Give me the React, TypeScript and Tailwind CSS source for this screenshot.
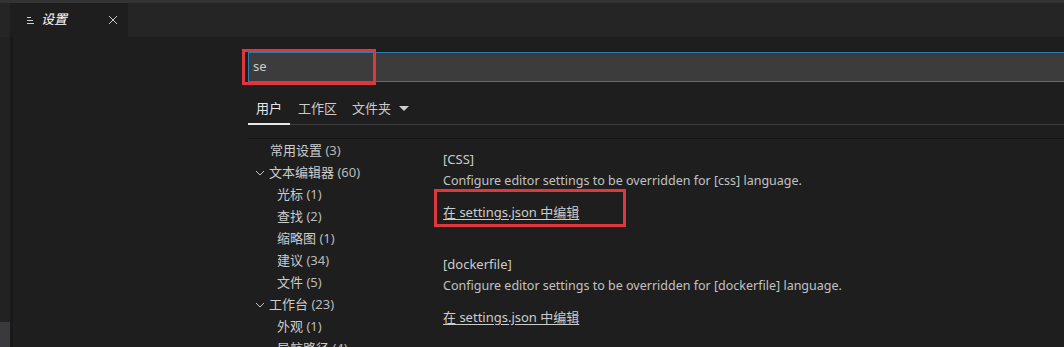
import React from "react";

const font = '"Noto Sans", "Noto Sans CJK SC", sans-serif';

type Item = { label: string; count: number; level: 0 | 1; open?: boolean };

const tree: Item[] = [
  { label: "常用设置", count: 3, level: 0 },
  { label: "文本编辑器", count: 60, level: 0, open: true },
  { label: "光标", count: 1, level: 1 },
  { label: "查找", count: 2, level: 1 },
  { label: "缩略图", count: 1, level: 1 },
  { label: "建议", count: 34, level: 1 },
  { label: "文件", count: 5, level: 1 },
  { label: "工作台", count: 23, level: 0, open: true },
  { label: "外观", count: 1, level: 1 },
  { label: "导航路径", count: 4, level: 1 },
];

function Chevron() {
  return (
    <svg width="10" height="10" viewBox="0 0 10 10" className="shrink-0">
      <path d="M1 3 L5 7 L9 3" fill="none" stroke="#c5c5c5" strokeWidth="1" />
    </svg>
  );
}

function Section({ name, lang, boxed }: { name: string; lang: string; boxed?: boolean }) {
  return (
    <div className="flex shrink-0 flex-col">
      <div className="h-[22px] leading-[22px] text-[#cccccc]">[{name}]</div>
      <div className="h-[22px] text-[12.5px] leading-[22px] text-[#c2c2c2]">
        Configure editor settings to be overridden for [{lang}] language.
      </div>
      <div className="relative mt-[9px] h-[22px] leading-[22px]">
        <span className="text-[#cccccc] underline underline-offset-2">在 settings.json 中编辑</span>
        {boxed && (
          <div className="pointer-events-none absolute left-[-9px] top-[-12px] h-[38px] w-[192px] border-[3px] border-[#e0373e]" />
        )}
      </div>
    </div>
  );
}

export default function App() {
  return (
    <div
      className="flex h-[347px] w-[1064px] flex-col overflow-hidden bg-[#1e1e1e] text-[13px]"
      style={{ fontFamily: font }}
    >
      <div className="h-[3px] shrink-0 bg-[#333333]" />
      <div className="flex h-[34px] shrink-0 bg-[#252526]">
        <div className="w-[10px] bg-[#252526]" />
        <div className="flex w-[118px] items-center bg-[#1e1e1e] pl-[16px] pr-[10px]">
          <svg width="9" height="9" viewBox="0 0 9 9" className="shrink-0">
            <path d="M1 1.5 H5 M1 4.5 H7 M1 7.5 H8" stroke="#cccccc" strokeWidth="1" />
          </svg>
          <span className="ml-[6px] italic text-[#ffffff]">设置</span>
          <svg width="10" height="10" viewBox="0 0 10 10" className="ml-auto">
            <path d="M1 1 L9 9 M9 1 L1 9" stroke="#cccccc" strokeWidth="1" />
          </svg>
        </div>
      </div>
      <div className="flex min-h-0 flex-1">
        <div className="flex w-[10px] shrink-0 flex-col justify-end bg-[#222222]">
          <div className="h-[25px] shrink-0 bg-[#3a3a3c]" />
        </div>
        <div className="w-[3px] shrink-0 bg-[#191919]" />
        <div className="flex min-w-0 flex-1 flex-col pl-[235px]">
          <div className="relative mt-[15px] flex h-[30px] shrink-0 items-center border-y border-l border-[#2d7cb0] bg-[#3c3c3c] pl-[4px] text-[#cccccc]">
            se
            <div className="pointer-events-none absolute left-[-7px] top-[-4px] h-[36px] w-[134px] border-[3px] border-[#e0373e]" />
          </div>
          <div className="mt-[12px] flex h-[31px] shrink-0 items-center border-b border-[#3c3c3c] text-[#cccccc]">
            <div className="relative flex h-full w-[42px] items-center justify-center text-[#e7e7e7]">
              用户
              <div className="absolute bottom-[-1px] left-0 right-0 h-[2px] bg-[#e7e7e7]" />
            </div>
            <span className="ml-[8px]">工作区</span>
            <span className="ml-[15px]">文件夹</span>
            <svg width="10" height="6" viewBox="0 0 10 6" className="ml-[8px]">
              <path d="M0 0 H10 L5 5 Z" fill="#cccccc" />
            </svg>
          </div>
          <div className="mt-[13px] h-[1px] shrink-0 bg-[#141414]" />
          <div className="flex shrink-0">
            <div className="flex w-[195px] shrink-0 flex-col pt-[1px] text-[#cccccc]">
              {tree.map((it) => (
                <div key={it.label} className="flex h-[22px] shrink-0 items-center">
                  {it.open ? (
                    <span className="ml-[7px] mr-[4px] flex"><Chevron /></span>
                  ) : (
                    <span className={it.level === 1 ? "w-[29px]" : "w-[22px]"} />
                  )}
                  <span>
                    {it.label} <span className="text-[#bbbbbb]">({it.count})</span>
                  </span>
                </div>
              ))}
            </div>
            <div className="flex flex-col pt-[9px]">
              <Section name="CSS" lang="css" boxed />
              <div className="mt-[30px] shrink-0">
                <Section name="dockerfile" lang="dockerfile" />
              </div>
            </div>
          </div>
        </div>
      </div>
    </div>
  );
}
